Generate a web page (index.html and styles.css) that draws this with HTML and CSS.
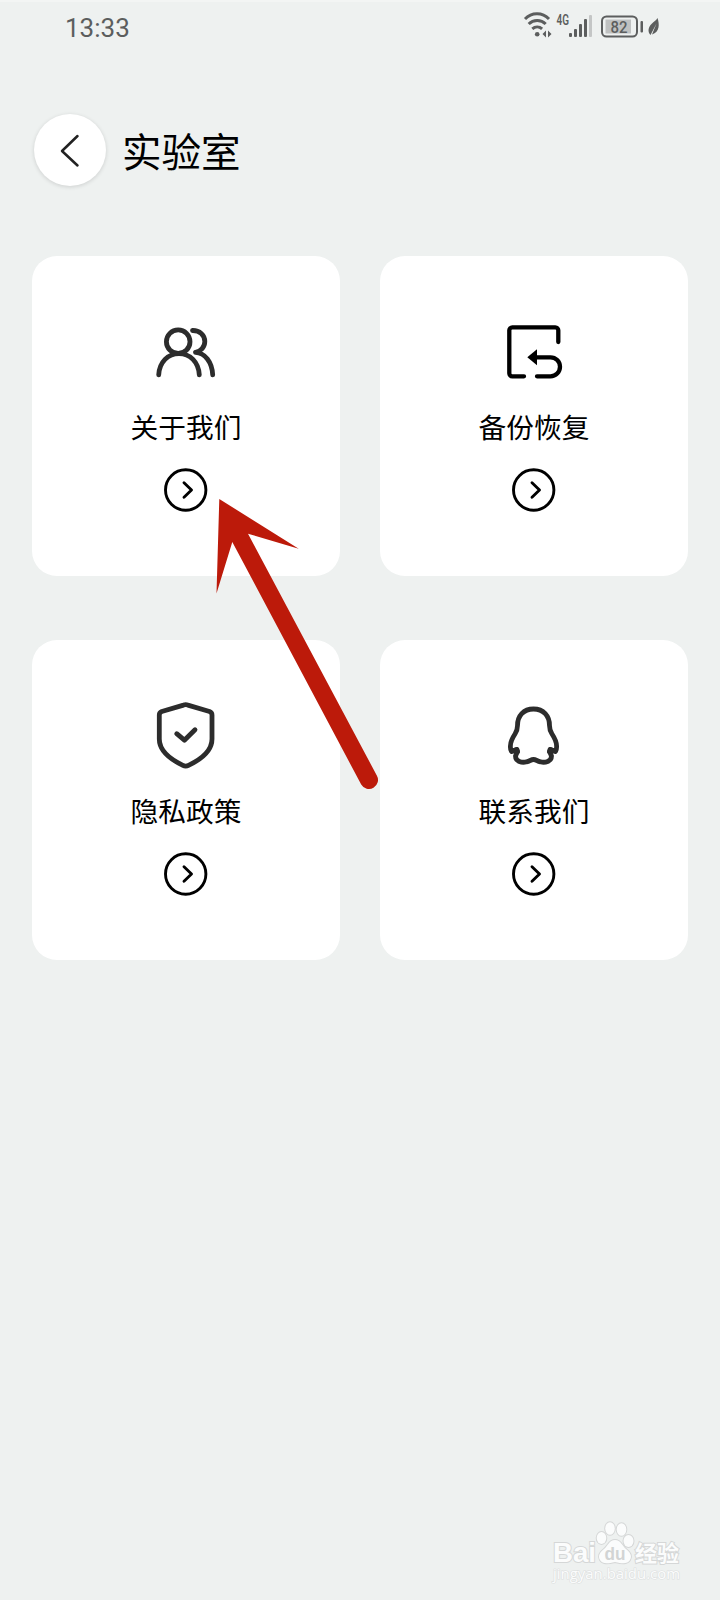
FILE: index.html
```
<!DOCTYPE html>
<html lang="zh-CN">

<head>
	<meta charset="utf-8">
	<title>实验室</title>
	<link rel="stylesheet" href="styles.css">
</head>

<body>
	<div class="status">
		<span class="time">13:33</span>
		<svg class="signals" width="140" height="30" viewBox="0 0 140 30">
			<g fill="none" stroke="#5c5e5e" stroke-width="3">
				<path d="M2 10a16.500 16.500 0 0 1 24 0M5.700 15a12 12 0 0 1 17 0M9.300 19.800a7.500 7.500 0 0 1 9.800 0" />
				<rect x="79" y="7.500" width="35" height="20" rx="4.500" stroke-width="2" />
			</g>
			<g fill="#5c5e5e">
				<circle cx="14.200" cy="25.300" r="2.300" />
				<path d="M23 21.500v7l-3.500-3.500zM25 21.500v7l3.500-3.500z" />
				<text x="33.500" y="16" class="net" textLength="12.500" lengthAdjust="spacingAndGlyphs">4G</text>
				<rect x="46" y="24" width="3" height="4" rx="1" />
				<rect x="51" y="20" width="3" height="8" rx="1" />
				<rect x="56" y="15" width="3" height="13" rx="1" />
				<rect x="61" y="10" width="3" height="18" rx="1" />
				<rect x="66" y="6" width="3" height="22" rx="1" fill="#c4c6c6" />
				<rect x="82.500" y="10.500" width="25.500" height="14" fill="#bfc1c1" />
				<text x="87.500" y="23.500" class="level" textLength="17" lengthAdjust="spacingAndGlyphs">82</text>
				<rect x="117.500" y="12" width="2.500" height="11.500" rx="1" />
				<path d="M134.500 9c2 6 2.500 14-5.500 16.500l4.500-11-6 11.500c-3-3-2.500-7.500 1-11 2.500-2.500 4.500-3.500 6-6z" />
			</g>
		</svg>
	</div>

	<div class="header">
		<a class="back">
			<svg width="72" height="72" viewBox="0 0 72 72">
				<path d="M43.500 22L28 37l15.500 14.500" fill="none" stroke="#222" stroke-width="2.500" stroke-linecap="round" stroke-linejoin="round" />
			</svg>
		</a>
		<h1>实验室</h1>
	</div>

	<div class="grid">
		<div class="card">
			<svg class="icon" viewBox="0 0 64 64">
				<circle cx="24.200" cy="21.700" r="11.800" />
				<path d="M4.700 54.800C5.500 42 14 33.600 25 33.600S44.500 42 45.300 54.800" />
				<path d="M38.500 10.500C45.500 10.300 50.800 15 50.800 21.500c0 5.500-4 10-9.300 10.900C51 33 58 42 58.700 54.800" />
			</svg>
			<span class="label">关于我们</span>
			<svg class="go" viewBox="0 0 44 44">
				<circle cx="21.700" cy="22" r="20.200" />
				<path d="M20 14.800l7.500 7.200-7.500 7.200" />
			</svg>
		</div>
		<div class="card">
			<svg class="icon black" viewBox="0 0 64 64">
				<path d="M56.300 22V10.300a3 3 0 0 0-3-3h-43a3 3 0 0 0-3 3v43a3 3 0 0 0 3 3H22" />
				<path d="M35 56.300h13.500a9.500 9.500 0 0 0 0-19H34" />
				<path class="solid" d="M25.300 37.300l9.700-8v16z" />
			</svg>
			<span class="label">备份恢复</span>
			<svg class="go" viewBox="0 0 44 44">
				<circle cx="21.700" cy="22" r="20.200" />
				<path d="M20 14.800l7.500 7.200-7.500 7.200" />
			</svg>
		</div>
		<div class="card">
			<svg class="icon" viewBox="0 0 64 64">
				<path d="M29.500 1.100Q31.700.3 33.900 1.100L55.500 7.500Q58 8.500 58 11V35C58 45 50 54 34.500 61.300Q31.700 62.800 28.900 61.300C13.500 54 5.300 45 5.300 35V11Q5.300 8.500 7.800 7.500Z" />
				<path d="M22.700 29.700l7.700 6.500L41 25.700" />
			</svg>
			<span class="label">隐私政策</span>
			<svg class="go" viewBox="0 0 44 44">
				<circle cx="21.700" cy="22" r="20.200" />
				<path d="M20 14.800l7.500 7.200-7.500 7.200" />
			</svg>
		</div>
		<div class="card">
			<svg class="icon" viewBox="0 0 64 64">
				<path d="M31.500 5C21.500 5 15.500 12 15.500 21.500C15.500 25 15 27 13 30C9 36 7.300 43 9.500 47.500L14.500 45.500L15.500 47.500L13.500 52C13.500 57.500 20 59 24.500 57.800C28 57 29 55.500 31.500 55.500S35 57 38.500 57.800C43 59 49.500 57.500 49.500 52L47.500 47.500L48.500 45.500L53.500 47.500C55.700 43 54 36 50 30C48 27 47.500 25 47.500 21.500C47.500 12 41.500 5 31.500 5Z" />
				<path d="M10 47l5-1.500.5 2M53 47l-5-1.500-.5 2" />
			</svg>
			<span class="label">联系我们</span>
			<svg class="go" viewBox="0 0 44 44">
				<circle cx="21.700" cy="22" r="20.200" />
				<path d="M20 14.800l7.500 7.200-7.500 7.200" />
			</svg>
		</div>
	</div>

	<svg class="pointer" viewBox="0 0 170 300">
		<path d="M9.300 9L88.700 58.700 38 43.700 166.800 285.500A9 9 0 0 1 151.200 294.500L22.300 52 6.500 103.500Z" />
	</svg>

	<svg class="watermark" viewBox="0 0 150 70">
		<g class="mark">
			<text x="1" y="32" class="bai" textLength="43" lengthAdjust="spacingAndGlyphs">Bai</text>
			<ellipse cx="49.500" cy="8" rx="4.800" ry="6" />
			<ellipse cx="58" cy="-1.500" rx="4.800" ry="6.300" />
			<ellipse cx="69.500" cy="-.5" rx="4.800" ry="6.300" />
			<ellipse cx="76.500" cy="11" rx="5" ry="6" />
			<path d="M63 10c6 0 7 6 11 9s6.500 7 4 11-7 4-15 2c-8 2-12.500 2-15-2s0-8 4-11 5-9 11-9z" />
			<text x="83" y="31" class="jy" textLength="44">经验</text>
			<text x="1" y="49" class="url" textLength="127" lengthAdjust="spacingAndGlyphs">jingyan.baidu.com</text>
		</g>
		<text x="52.500" y="30" class="du" textLength="21" lengthAdjust="spacingAndGlyphs">du</text>
	</svg>
</body>

</html>
```
FILE: styles.css
```
* {
	margin: 0px;
	padding: 0px;
	box-sizing: border-box;
}

body {
	position: relative;
	height: 1600px;
	background: #eef1f0;
	color: #000;
	font-family: "Noto Sans CJK SC", sans-serif;
	overflow: hidden;
}

.status {
	display: flex;
	justify-content: space-between;
	height: 56px;
	padding: 9px 57px 0 65px;
	border-top: 2px solid #f3f5f4;
	padding-top: 7px;
}

.time {
	font-family: Roboto, sans-serif;
	font-size: 26px;
	line-height: 39px;
	color: #5c5e5e;
}

.net {
	font: 600 14px Roboto, sans-serif;
}

.level {
	font: 500 16px Roboto, sans-serif;
}

.header {
	display: flex;
	align-items: center;
	gap: 16px;
	height: 72px;
	margin: 58px 34px 0;
}

.back {
	width: 72px;
	height: 72px;
	border-radius: 50%;
	background: #fff;
	box-shadow: 0 1px 4px rgba(0, 0, 0, 0.14);
}

h1 {
	font-size: 39.5px;
	font-weight: normal;
	line-height: 56px;
}

.grid {
	display: grid;
	grid-template-columns: 308px 308px;
	gap: 64px 40px;
	margin: 70px 32px 0;
}

.card {
	display: flex;
	flex-direction: column;
	align-items: center;
	height: 320px;
	padding-top: 64px;
	border-radius: 25px;
	background: #fff;
}

.icon {
	width: 64px;
	height: 64px;
	overflow: visible;
	fill: none;
	stroke: #2c2c2c;
	stroke-width: 4.8;
	stroke-linecap: round;
	stroke-linejoin: round;
}

.black {
	stroke: #000;
	stroke-width: 4.3;
}

.solid {
	fill: #000;
	stroke: none;
}

.label {
	margin-top: 22px;
	font-size: 27.7px;
	line-height: 40px;
}

.go {
	width: 44px;
	height: 44px;
	margin-top: 21.5px;
	fill: none;
	stroke: #000;
	stroke-width: 2.9;
	stroke-linecap: round;
	stroke-linejoin: round;
}

.pointer {
	position: absolute;
	left: 210px;
	top: 490px;
	width: 170px;
	height: 300px;
	fill: #bc1a0a;
}

.watermark {
	position: absolute;
	left: 552px;
	top: 1530px;
	width: 150px;
	height: 70px;
	overflow: visible;
}

.mark {
	fill: #fbfcfc;
	stroke: #d5d7d7;
	stroke-width: 2;
	paint-order: stroke;
}

.bai {
	font: bold 28px "Liberation Sans", sans-serif;
}

.du {
	font: bold 19px "Liberation Sans", sans-serif;
	fill: #d2d4d4;
}

.jy {
	font: bold 22px "Noto Sans CJK SC", sans-serif;
}

.url {
	font: 14px "Open Sans", sans-serif;
	stroke: #dddfdf;
	stroke-width: 1.2;
}
```
